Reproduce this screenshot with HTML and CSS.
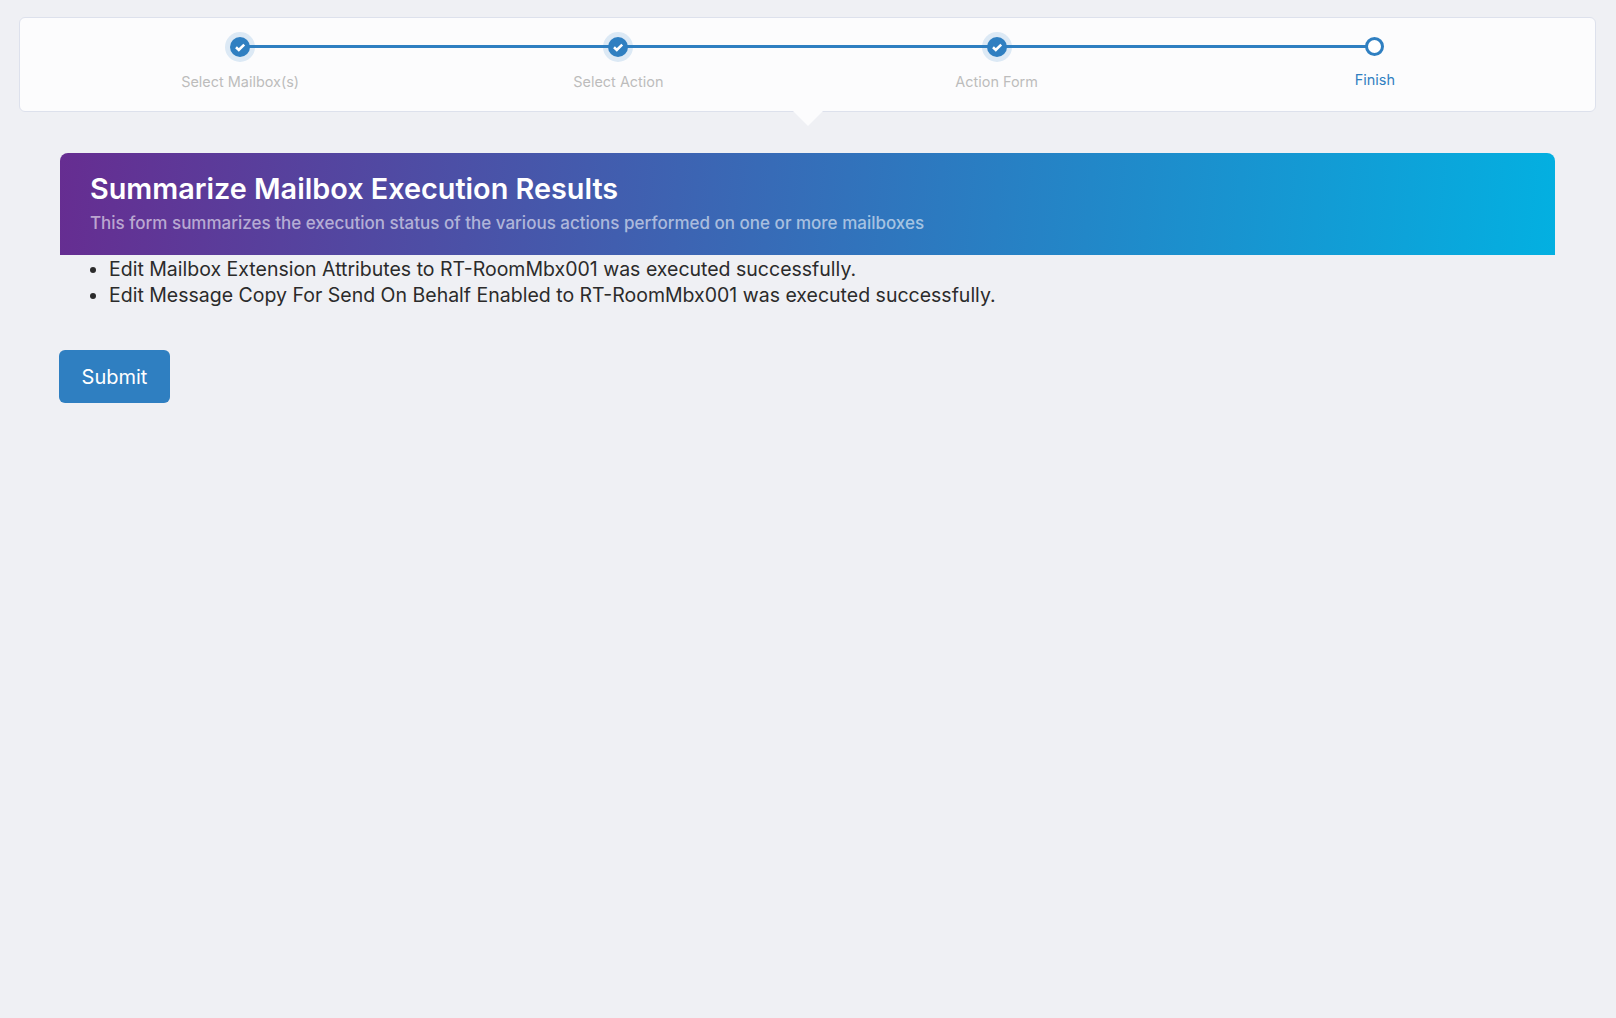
FILE: index.html
```html
<!DOCTYPE html>
<html lang="en">
<head>
<meta charset="utf-8">
<title>Summarize Mailbox Execution Results</title>
<link rel="stylesheet" href="styles.css">
</head>
<body>
<div class="stepper-card">
  <div class="step done">
    <span class="dot"><svg viewBox="0 0 20 20" width="20" height="20"><path class="tick" d="M6 10.3l2.8 2.6L14.2 7.6"/></svg></span>
    <span class="label">Select Mailbox(s)</span>
  </div>
  <div class="step done">
    <span class="dot"><svg viewBox="0 0 20 20" width="20" height="20"><path class="tick" d="M6 10.3l2.8 2.6L14.2 7.6"/></svg></span>
    <span class="label">Select Action</span>
  </div>
  <div class="step done">
    <span class="dot"><svg viewBox="0 0 20 20" width="20" height="20"><path class="tick" d="M6 10.3l2.8 2.6L14.2 7.6"/></svg></span>
    <span class="label">Action Form</span>
  </div>
  <div class="step current">
    <span class="ring"></span>
    <span class="label">Finish</span>
  </div>
</div>
<main class="content">
  <header class="banner">
    <h1 class="banner-title">Summarize Mailbox Execution Results</h1>
    <p class="banner-sub">This form summarizes the execution status of the various actions performed on one or more mailboxes</p>
  </header>
  <ul class="results">
    <li>Edit Mailbox Extension Attributes to RT-RoomMbx001 was executed successfully.</li>
    <li>Edit Message Copy For Send On Behalf Enabled to RT-RoomMbx001 was executed successfully.</li>
  </ul>
  <button class="submit" type="button">Submit</button>
</main>
</body>
</html>
```
FILE: styles.css
```css
* { box-sizing: border-box; }
html, body { height: 100%; }
body {
  margin: 0;
  padding: 17px 19px 0;
  background: #eff0f4;
  font-family: Inter, Roboto, "Liberation Sans", sans-serif;
  color: #2b2b2b;
}
.stepper-card {
  position: relative;
  display: grid;
  grid-template-columns: repeat(4, 1fr);
  width: 1577px;
  height: 95px;
  padding: 0 31px;
  background: #fcfcfd;
  border: 1px solid #dde1ec;
  border-radius: 6px;
}
.stepper-card::after {
  content: "";
  position: absolute;
  left: 773px;
  bottom: -15px;
  border: 15px solid transparent;
  border-bottom-width: 0;
  border-top-color: #fcfcfd;
}
.step {
  position: relative;
  display: flex;
  flex-direction: column;
  align-items: center;
  padding-top: 14px;
}
.step.done::after {
  content: "";
  position: absolute;
  z-index: 1;
  left: 50%;
  width: 100%;
  top: 27px;
  height: 3px;
  background: #2f7fc1;
}
.dot {
  width: 30px;
  height: 30px;
  padding: 5px;
  border-radius: 50%;
  background: #dce9f5;
}
.dot svg {
  position: relative;
  z-index: 2;
  display: block;
  border-radius: 50%;
  background: #2f7fc1;
}
.tick {
  fill: none;
  stroke: #fff;
  stroke-width: 2.6;
}
.ring {
  position: relative;
  z-index: 2;
  width: 19px;
  height: 19px;
  margin-top: 5px;
  border: 3px solid #2f7fc1;
  border-radius: 50%;
  background: #fff;
}
.label {
  margin-top: 11px;
  font-size: 14.45px;
  line-height: 18px;
  color: #bcbcbc;
}
.current .label {
  margin-top: 15px;
  color: #2f7fc1;
}
.content {
  padding: 41px 42px 0 40px;
}
.banner {
  height: 102px;
  margin-left: 1px;
  padding: 18px 29px 0 30px;
  border-radius: 8px 8px 0 0;
  background: linear-gradient(95deg, #662d91, #03b0e1);
}
.banner-title {
  margin: 0;
  font-size: 28.8px;
  line-height: 36px;
  font-weight: 600;
  color: #fff;
}
.banner-sub {
  margin: 4px 0 0;
  font-size: 17px;
  line-height: 24px;
  font-weight: 500;
  color: rgba(255, 255, 255, 0.58);
}
.results {
  margin: 0;
  padding: 1px 0 0 50px;
  font-size: 19.5px;
  line-height: 26px;
}
.submit {
  display: block;
  width: 111px;
  height: 53px;
  margin-top: 42px;
  padding: 0;
  border: 0;
  border-radius: 6px;
  background: #2f7fc1;
  color: #fff;
  font: 20px Inter, Roboto, "Liberation Sans", sans-serif;
}
```
